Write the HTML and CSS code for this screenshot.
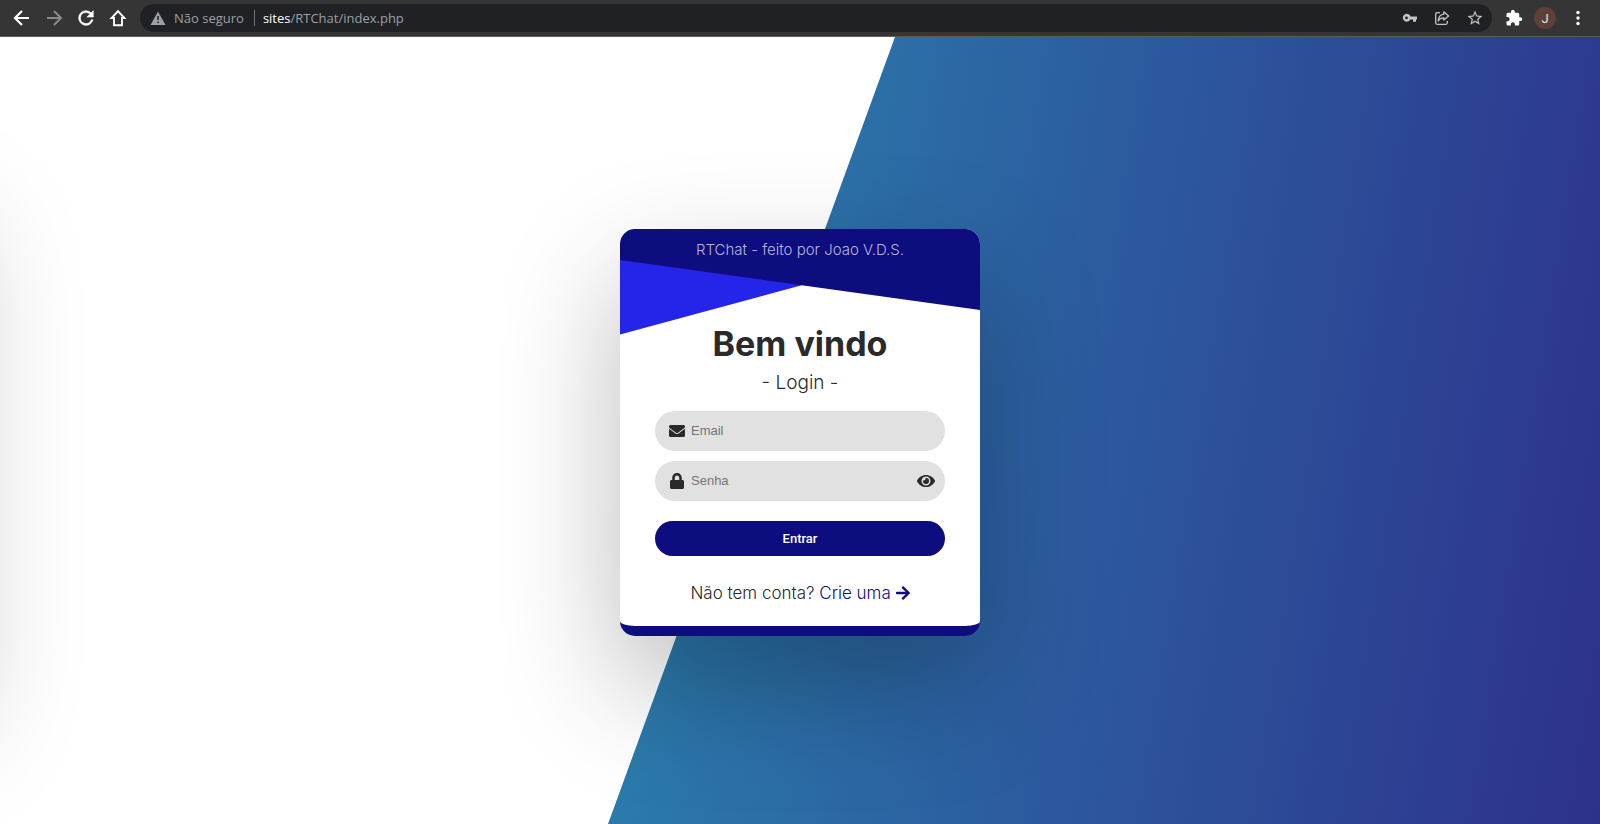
FILE: index.html
```html
<!DOCTYPE html>
<html lang="pt-BR">
<head>
<meta charset="utf-8">
<title>RTChat</title>
<link rel="stylesheet" href="styles.css">
</head>
<body>
<header class="toolbar">
  <button class="nav-btn" type="button" aria-label="Voltar"><svg width="24" height="24" viewBox="0 0 24 24"><path fill="none" stroke="currentColor" stroke-width="2.2" d="M19 12H6M12 5l-7 7 7 7"/></svg></button>
  <button class="nav-btn nav-btn-off" type="button" aria-label="Avançar"><svg width="24" height="24" viewBox="0 0 24 24"><path fill="none" stroke="currentColor" stroke-width="2" d="M5 12h13M12 5l7 7-7 7"/></svg></button>
  <button class="nav-btn" type="button" aria-label="Recarregar"><svg width="22" height="22" viewBox="0 0 24 24"><path fill="currentColor" d="M17.65 6.35A7.96 7.96 0 0 0 12 4a8 8 0 1 0 7.73 10h-2.08A6 6 0 1 1 12 6c1.66 0 3.14.69 4.22 1.78L13 11h7V4z" stroke="currentColor" stroke-width=".6"/></svg></button>
  <button class="nav-btn" type="button" aria-label="Página inicial"><svg width="24" height="24" viewBox="0 0 24 24"><path fill="none" stroke="currentColor" stroke-width="1.9" d="M12 5.200L5.600 12H8v7.200h8V12h2.400z"/></svg></button>
  <div class="address">
    <svg class="warn" width="16" height="16" viewBox="0 0 16 16"><path fill="currentColor" fill-rule="evenodd" d="M8 1.500L15.500 15H.5zM7.300 6v4h1.500V6zm0 5.500V13h1.500v-1.500z"/></svg>
    <span class="insecure">Não seguro</span>
    <span class="divider"></span>
    <span class="url"><b>sites</b>/RTChat/index.php</span>
    <span class="address-icons">
      <svg width="16" height="16" viewBox="0 0 16 16"><path fill="currentColor" fill-rule="evenodd" d="M4.500 3.800a4 4 0 0 1 3.900 2.800H15v3h-1v2.200h-3V9.600H8.400A4 4 0 1 1 4.500 3.800zm0 2.700a1.400 1.400 0 1 0 0 2.800 1.400 1.400 0 0 0 0-2.800z"/></svg>
      <svg width="16" height="16" viewBox="0 0 16 16"><g fill="none" stroke="currentColor" stroke-width="1.300"><path d="M6 2.700H3.200Q1.700 2.700 1.700 4.200v8.600q0 1.500 1.500 1.500h8.600q1.500 0 1.500-1.500V11"/><path stroke-linejoin="round" d="M9.800 1.800L14.600 6l-4.800 4V7.800Q6 7.600 4.200 11 4.700 4.800 9.800 4.200z"/></g></svg>
      <svg width="18" height="18" viewBox="0 0 24 24"><path fill="currentColor" d="M22 9.240l-7.190-.62L12 2 9.190 8.630 2 9.240l5.460 4.730L5.820 21 12 17.270 18.180 21l-1.630-7.030zM12 15.400l-3.760 2.270 1-4.280-3.320-2.880 4.380-.38L12 6.100l1.710 4.040 4.380.38-3.320 2.880 1 4.280z"/></svg>
    </span>
  </div>
  <button class="nav-btn" type="button" aria-label="Extensões"><svg width="18" height="18" viewBox="0 0 24 24"><path fill="currentColor" d="M20.500 11H19V7a2 2 0 0 0-2-2h-4V3.500a2.500 2.500 0 0 0-5 0V5H4a2 2 0 0 0-2 2v3.800h1.500a2.700 2.700 0 0 1 0 5.400H2V20a2 2 0 0 0 2 2h3.800v-1.500a2.700 2.700 0 0 1 5.400 0V22H17a2 2 0 0 0 2-2v-4h1.500a2.500 2.500 0 0 0 0-5z"/></svg></button>
  <button class="avatar" type="button" aria-label="Perfil J">J</button>
  <button class="nav-btn" type="button" aria-label="Menu"><svg width="18" height="18" viewBox="0 0 18 18"><g fill="currentColor"><circle cx="9" cy="3.500" r="1.700"/><circle cx="9" cy="9" r="1.700"/><circle cx="9" cy="14.500" r="1.700"/></g></svg></button>
</header>
<main class="stage">
  <div class="offstage-card" aria-hidden="true"></div>
  <section class="card">
    <div class="banner">
      <svg class="banner-art" viewBox="0 0 360 108" preserveAspectRatio="none" aria-hidden="true"><path fill="#2525ea" d="M0 20h190v34L0 105.500z"/><path fill="#0d0d7f" d="M0 0h360v81L0 31z"/></svg>
      <p class="credit">RTChat - feito por Joao V.D.S.</p>
    </div>
    <form class="login">
      <h1 class="title">Bem vindo</h1>
      <p class="subtitle">- Login -</p>
      <label class="field">
        <svg width="16" height="16" viewBox="0 0 512 512"><path fill="currentColor" d="M502.300 190.800c3.900-3.100 9.700-.2 9.700 4.700V400c0 26.500-21.500 48-48 48H48c-26.500 0-48-21.500-48-48V195.600c0-5 5.700-7.800 9.700-4.700 22.400 17.400 52.100 39.500 154.100 113.600 21.100 15.400 56.700 47.800 92.200 47.600 35.700.3 72-32.800 92.300-47.600 102-74.100 131.600-96.300 154-113.700zM256 320c23.200.4 56.600-29.200 73.400-41.400 132.700-96.300 142.800-104.700 173.400-128.700 5.800-4.500 9.200-11.500 9.200-18.900v-19c0-26.500-21.500-48-48-48H48c-26.500 0-48 21.500-48 48v19c0 7.400 3.400 14.300 9.200 18.900 30.600 23.900 40.700 32.400 173.400 128.700 16.800 12.200 50.200 41.800 73.400 41.400z"/></svg>
        <input type="email" placeholder="Email" aria-label="Email">
      </label>
      <div class="field">
        <svg width="16" height="16" viewBox="-32 0 512 512"><path fill="currentColor" d="M400 224h-24v-72C376 68.200 307.800 0 224 0S72 68.200 72 152v72H48c-26.500 0-48 21.500-48 48v192c0 26.500 21.500 48 48 48h352c26.500 0 48-21.500 48-48V272c0-26.500-21.500-48-48-48zm-104 0H152v-72c0-39.700 32.300-72 72-72s72 32.300 72 72v72z"/></svg>
        <input type="password" placeholder="Senha" aria-label="Senha">
        <button class="reveal" type="button" aria-label="Mostrar senha"><svg width="18" height="16" viewBox="0 0 576 512"><path fill="currentColor" d="M572.520 241.400C518.290 135.590 410.930 64 288 64S57.680 135.640 3.480 241.410a32.350 32.350 0 0 0 0 29.190C57.710 376.410 165.070 448 288 448s230.320-71.640 284.520-177.410a32.350 32.350 0 0 0 0-29.190zM288 400a144 144 0 1 1 144-144 143.930 143.930 0 0 1-144 144zm0-240a95.310 95.310 0 0 0-25.310 3.790 47.850 47.850 0 0 1-66.900 66.900A95.780 95.780 0 1 0 288 160z"/></svg></button>
      </div>
      <button class="submit" type="submit">Entrar</button>
      <p class="signup">Não tem conta? <a href="#criar">Crie uma <svg width="14" height="16" viewBox="0 0 448 512"><path fill="currentColor" d="M190.500 66.900l22.200-22.200c9.400-9.400 24.600-9.400 33.900 0L441 239c9.400 9.400 9.400 24.600 0 33.900L246.600 467.300c-9.400 9.400-24.600 9.400-33.900 0l-22.200-22.200c-9.500-9.500-9.300-25 .4-34.300L311.400 296H24c-13.300 0-24-10.700-24-24v-32c0-13.300 10.700-24 24-24h287.400L190.900 101.200c-9.800-9.300-10-24.800-.4-34.300z"/></svg></a></p>
    </form>
  </section>
</main>
</body>
</html>
```
FILE: styles.css
```css
* {
  box-sizing: border-box;
}

body {
  margin: 0;
  min-height: 100vh;
  display: flex;
  flex-direction: column;
  font-family: Inter, "Open Sans", sans-serif;
  color: #2a2a2a;
  background: #fff;
}

p,
h1 {
  margin: 0;
}

button {
  border: 0;
  padding: 0;
  background: none;
  color: inherit;
  cursor: pointer;
}

svg {
  display: block;
}

/* Browser toolbar */
.toolbar {
  display: flex;
  align-items: center;
  gap: 8px;
  height: 37px;
  padding: 0 10px;
  background: #353535;
  border-bottom: 1px solid #5c5c5c;
  color: #fff;
}

.nav-btn {
  display: grid;
  place-items: center;
  width: 24px;
  height: 24px;
}

.nav-btn svg {
  flex: none;
}

.nav-btn-off {
  color: #8a8a8a;
}

.address {
  flex: 1;
  display: flex;
  align-items: center;
  gap: 8px;
  height: 28px;
  margin: 0 2px;
  padding: 0 8px 0 10px;
  border-radius: 14px;
  background: #202124;
  color: #9aa0a6;
  font-family: "Open Sans", "Noto Sans", sans-serif;
  font-size: 13px;
}

.divider {
  width: 1px;
  height: 16px;
  margin-left: 2px;
  background: #72767a;
}

.url b {
  color: #fff;
  font-weight: 400;
}

.address-icons {
  display: flex;
  align-items: center;
  gap: 16px;
  margin-left: auto;
  color: #c4c4c4;
}

.avatar {
  width: 22px;
  height: 22px;
  margin-right: 2px;
  border-radius: 50%;
  background: #5d4037;
  color: #e8e0dd;
  font: 13px Roboto, sans-serif;
}

/* Page */
.stage {
  position: relative;
  flex: 1;
  display: flex;
  align-items: center;
  justify-content: center;
  padding-top: 3px;
  overflow: hidden;
}

.stage::before {
  content: "";
  position: absolute;
  inset: 0;
  background: linear-gradient(99deg, #2b80ae 38%, #2c5fa0 63%, #2d318c 100%);
  clip-path: polygon(calc(50% + 95px) 0, 100% 0, 100% 100%, calc(50% - 192px) 100%);
}

.card,
.offstage-card {
  width: 360px;
  border-radius: 15px;
  box-shadow: 0 50px 120px rgba(0, 0, 0, 0.27);
}

.offstage-card {
  position: absolute;
  top: 140px;
  left: -400px;
  height: 500px;
}

.card {
  position: relative;
  overflow: hidden;
  background: #fff;
  border-bottom: 10px solid #0d0d7f;
}

.banner {
  display: grid;
  height: 92px;
}

.banner-art,
.credit {
  grid-area: 1 / 1;
}

.banner-art {
  width: 100%;
  height: 108px;
}

.credit {
  padding-top: 11px;
  color: #b6b6d9;
  font-size: 15px;
  font-weight: 300;
  line-height: 20px;
  text-align: center;
  z-index: 1;
}

.login {
  position: relative;
  display: flex;
  flex-direction: column;
  padding: 0 35px 20px;
  text-align: center;
}

.title {
  font-size: 34px;
  font-weight: 700;
  line-height: 46px;
}

.subtitle {
  margin: 2px 0 14px;
  font-size: 19px;
  font-weight: 300;
  line-height: 28px;
}

.field {
  display: flex;
  align-items: center;
  gap: 6px;
  height: 40px;
  margin-bottom: 10px;
  padding: 0 10px 0 14px;
  border-radius: 20px;
  background: #e1e1e1;
}

.field input {
  flex: 1;
  min-width: 0;
  padding: 0;
  border: 0;
  outline: 0;
  background: none;
  color: #2a2a2a;
  font: 13px "Liberation Sans", Arial, sans-serif;
}

.field input::placeholder {
  color: #757575;
}

.submit {
  height: 35px;
  margin-top: 10px;
  border-radius: 18px;
  background: #0d0d7f;
  color: #fff;
  font: 500 13px Roboto, Arial, sans-serif;
}

.signup {
  margin-top: 25px;
  font-size: 17px;
  font-weight: 300;
  line-height: 25px;
  white-space: nowrap;
}

.signup a {
  color: #0d0d7f;
  text-decoration: none;
}

.signup svg {
  display: inline-block;
  vertical-align: -2px;
}
```
